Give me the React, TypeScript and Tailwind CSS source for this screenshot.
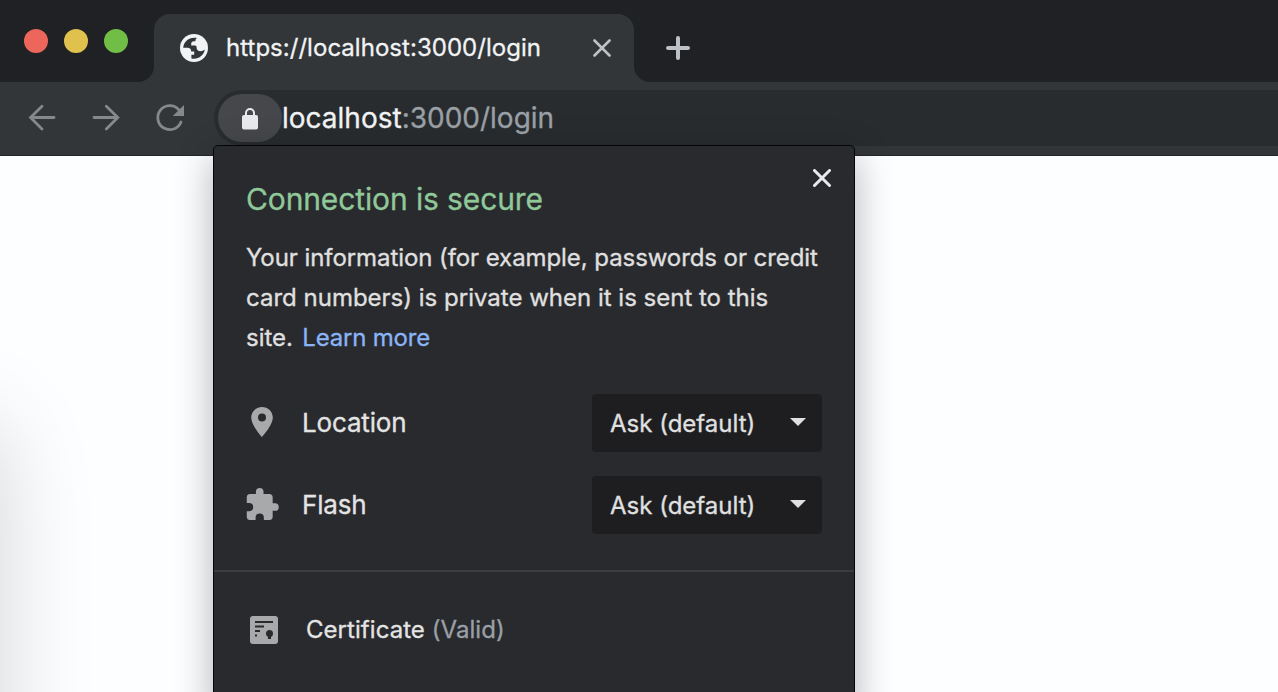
import React from "react";

function GlobeIcon() {
  return (
    <svg width="28" height="28" viewBox="0 0 28 28">
      <circle cx="14" cy="14" r="14" fill="#f1f3f4" />
      <path
        fill="#323639"
        d="M17 4C11 2.600 5.400 5.800 3.600 11.400L3.200 13.800H7.400C10 13.800 11.200 15 11.200 17.400H14.200V20.800H11.400V24.400C17.600 26 23.800 22 24.800 15.600C23.400 16.800 22 17.200 20.600 17.200C18 17.200 16.600 15.600 16.600 13.400C16.600 12.200 16 11.600 14.800 11.600H11.200V10C11.200 8 12.200 7.200 14 7.200H15.400C15.400 5.600 16 4.600 17 4Z"
      />
    </svg>
  );
}

function Cross({ size, stroke, color }: { size: number; stroke: number; color: string }) {
  return (
    <svg width={size} height={size} viewBox={`0 0 ${size} ${size}`} stroke={color} strokeWidth={stroke} strokeLinecap="round">
      <path d={`M1.500 1.500L${size - 1.5} ${size - 1.5}M${size - 1.5} 1.500L1.500 ${size - 1.5}`} />
    </svg>
  );
}

function TabStrip() {
  return (
    <div className="flex h-[82px] shrink-0 bg-[#323639]">
      <div className="flex w-[154px] shrink-0 gap-4 rounded-br-[16px] bg-[#202124] pl-6 pt-[29px]">
        <span className="size-6 rounded-full bg-[#ed665b]" />
        <span className="size-6 rounded-full bg-[#e0c14e]" />
        <span className="size-6 rounded-full bg-[#71be47]" />
      </div>
      <div className="w-[480px] shrink-0 bg-[linear-gradient(#202124_40px,#323639_40px)] pt-[14px]">
        <div className="flex h-[68px] items-center rounded-t-[16px] bg-[#323639] pl-[26px]">
          <GlobeIcon />
          <span className="ml-[18px] w-[367px] whitespace-nowrap text-[24px] leading-none tracking-[0.03px] text-[#f1f3f4]">
            https://localhost:3000/login
          </span>
          <Cross size={18} stroke={2.6} color="#bfc1c3" />
        </div>
      </div>
      <div className="flex-1 rounded-bl-[16px] bg-[#202124] pl-8 pt-9">
        <svg width="24" height="24" viewBox="0 0 24 24" stroke="#bdc1c6" strokeWidth="4" strokeLinecap="round">
          <path d="M12 2V22M2 12H22" />
        </svg>
      </div>
    </div>
  );
}

function Toolbar() {
  return (
    <div className="flex h-[74px] shrink-0 items-start border-b border-[#232527] bg-[#323639] pt-2">
      <svg width="216" height="56" viewBox="0 0 216 56" fill="none" stroke="#85898b" strokeWidth="2.8" strokeLinecap="round" className="shrink-0">
        <path d="M54 27.500H31M42 16.200L30.500 27.500L42 39" />
        <path d="M94 27.500H117M106.300 16.200L117.800 27.500L106.300 39" />
        <path d="M181 32A12 12 0 1 1 178.600 19.500" />
        <path d="M184 15V26H172.800Z" fill="#85898b" stroke="none" />
      </svg>
      <div className="-ml-0.5 flex h-14 flex-1 items-center rounded-l-full bg-[#282c2f] pl-1">
        <span className="flex h-12 w-16 shrink-0 items-center justify-center rounded-full bg-[#46474b]">
          <svg width="16" height="22" viewBox="0 0 16 22" className="mt-px">
            <rect x="0" y="7" width="16" height="14.500" rx="2" fill="#e8eaed" />
            <path d="M4 8V5A4 4 0 0 1 12 5V8" fill="none" stroke="#e8eaed" strokeWidth="2" />
          </svg>
        </span>
        <span className="whitespace-nowrap text-[28px] leading-none text-[#f1f3f4]">
          localhost<span className="text-[#9aa0a6]">:3000/login</span>
        </span>
      </div>
    </div>
  );
}

function PermissionRow({ icon, label }: { icon: React.ReactNode; label: string }) {
  return (
    <div className="flex h-[58px] items-center">
      <span className="flex w-14 shrink-0">{icon}</span>
      <span className="flex-1 pb-0.5 text-[26px] tracking-[-0.17px] text-[#e4e4e4]">{label}</span>
      <button className="flex h-[58px] w-[230px] items-center justify-between rounded bg-[#1e1e20] pl-[18px] pr-4 text-[24px] text-[#e0e0e0]">
        <span className="whitespace-nowrap pt-0.5">Ask (default)</span>
        <svg width="16" height="8" viewBox="0 0 16 8" fill="#e0e0e0" className="mb-0.5">
          <path d="M0 0H16L8 8Z" />
        </svg>
      </button>
    </div>
  );
}

function SecurityPopup() {
  return (
    <section className="absolute left-[213px] top-[145px] flex h-[570px] w-[642px] flex-col rounded-[5px] border border-[#050507] bg-[#292a2d] shadow-[0_12px_38px_rgba(0,0,0,0.3)]">
      <button className="absolute right-[23px] top-[23px]" aria-label="Close">
        <Cross size={18} stroke={3} color="#e8eaed" />
      </button>
      <div className="h-[424px] shrink-0 px-8 pt-[34px]">
        <h1 className="h-[38px] whitespace-nowrap text-[30px] leading-[39px] tracking-[-0.12px] text-[#8fc899]">
          Connection is secure
        </h1>
        <p className="mt-5 whitespace-nowrap text-[24px] leading-[40px] text-[#e0e0e0]">
          <span className="tracking-[-0.075px]">Your information (for example, passwords or credit</span>
          <br />
          card numbers) is private when it is sent to this
          <br />
          site. <a className="ml-[2.500px] tracking-[-0.2px] text-[#8ab4f8]">Learn more</a>
        </p>
        <div className="mt-[36px] flex flex-col gap-6">
          <PermissionRow
            label="Location"
            icon={
              <svg width="32" height="36" viewBox="0 0 32 36" fill="#a8a9ab">
                <path fillRule="evenodd" d="M16 2C10 2 5.200 6.600 5.200 12.600C5.200 20.500 16 32 16 32S26.800 20.500 26.800 12.600C26.800 6.600 22 2 16 2ZM16 8.400A4 4 0 1 1 16 16.400A4 4 0 0 1 16 8.400Z" />
              </svg>
            }
          />
          <PermissionRow
            label="Flash"
            icon={
              <svg width="33" height="32" viewBox="1.500 1 21.650 21" fill="#a8a9ab" className="mb-0.5">
                <path d="M20.500 11H19V7c0-1.100-.9-2-2-2h-4V3.500a2.500 2.500 0 0 0-5 0V5H4c-1.100 0-2 .9-2 2v3.800h1.500a2.700 2.700 0 0 1 0 5.400H2V20c0 1.100.9 2 2 2h3.800v-1.500a2.700 2.700 0 0 1 5.400 0V22H17c1.100 0 2-.9 2-2v-4h1.500a2.500 2.500 0 0 0 0-5z" />
              </svg>
            }
          />
        </div>
      </div>
      <div className="h-0.5 shrink-0 bg-[#3b3c3f]" />
      <div className="flex h-[116px] items-center pl-9">
        <svg width="28" height="28" viewBox="0 0 28 28">
          <rect width="28" height="28" rx="3" fill="#a8a9ab" />
          <path d="M5 6H23M5 10.500H14M5 15H10M5 19.500H7" stroke="#292a2d" strokeWidth="2" />
          <circle cx="19.500" cy="17.500" r="3.500" fill="#292a2d" />
          <path d="M18 19H21V23H18Z" fill="#292a2d" />
        </svg>
        <span className="ml-7 whitespace-nowrap text-[24px] tracking-[0.05px] text-[#e4e4e4]">
          Certificate <span className="text-[#9aa0a6]">(Valid)</span>
        </span>
      </div>
    </section>
  );
}

export default function App() {
  return (
    <main className="relative flex h-[692px] w-[1278px] flex-col overflow-hidden bg-[#fdfeff] font-['Inter',sans-serif] [-webkit-text-stroke:0.3px]">
      <TabStrip />
      <Toolbar />
      <div className="relative flex-1 overflow-hidden">
        <div className="absolute -left-[600px] top-[274px] h-[700px] w-[596px] shadow-[0_0_90px_rgba(0,0,0,0.18)]" />
      </div>
      <SecurityPopup />
    </main>
  );
}
